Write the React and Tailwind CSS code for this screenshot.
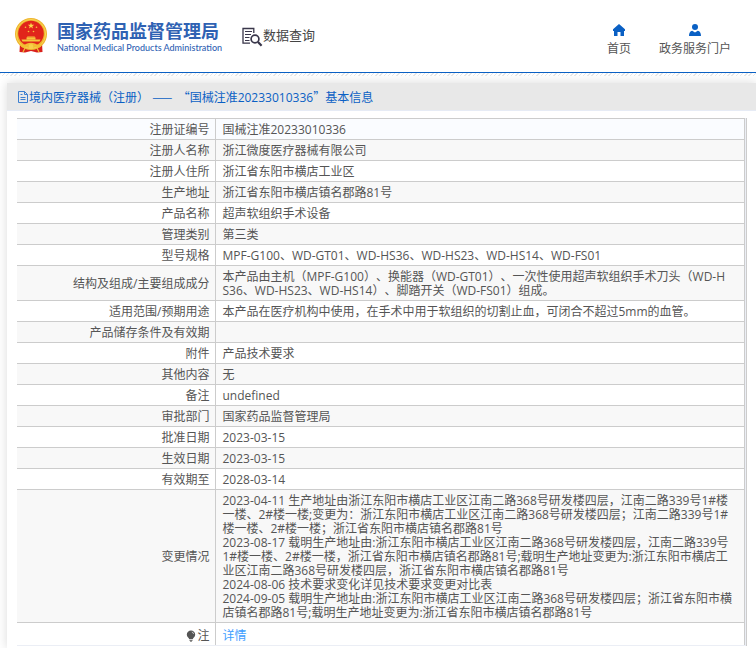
import React from 'react';

const rows = [
    { label: '注册证编号', value: '国械注准20233010336' },
    { label: '注册人名称', value: '浙江微度医疗器械有限公司' },
    { label: '注册人住所', value: '浙江省东阳市横店工业区' },
    { label: '生产地址', value: '浙江省东阳市横店镇名郡路81号' },
    { label: '产品名称', value: '超声软组织手术设备' },
    { label: '管理类别', value: '第三类' },
    { label: '型号规格', value: 'MPF-G100、WD-GT01、WD-HS36、WD-HS23、WD-HS14、WD-FS01' },
    {
        label: '结构及组成/主要组成成分',
        value: '本产品由主机（MPF-G100）、换能器（WD-GT01）、一次性使用超声软组织手术刀头（WD-H\nS36、WD-HS23、WD-HS14）、脚踏开关（WD-FS01）组成。',
    },
    { label: '适用范围/预期用途', value: '本产品在医疗机构中使用，在手术中用于软组织的切割止血，可闭合不超过5mm的血管。' },
    { label: '产品储存条件及有效期', value: '' },
    { label: '附件', value: '产品技术要求' },
    { label: '其他内容', value: '无' },
    { label: '备注', value: 'undefined' },
    { label: '审批部门', value: '国家药品监督管理局' },
    { label: '批准日期', value: '2023-03-15' },
    { label: '生效日期', value: '2023-03-15' },
    { label: '有效期至', value: '2028-03-14' },
    {
        label: '变更情况',
        value: [
            '2023-04-11 生产地址由浙江东阳市横店工业区江南二路368号研发楼四层，江南二路339号1#楼',
            '一楼、2#楼一楼;变更为：浙江东阳市横店工业区江南二路368号研发楼四层；江南二路339号1#',
            '楼一楼、2#楼一楼；浙江省东阳市横店镇名郡路81号',
            '2023-08-17 载明生产地址由:浙江东阳市横店工业区江南二路368号研发楼四层，江南二路339号',
            '1#楼一楼、2#楼一楼，浙江省东阳市横店镇名郡路81号;载明生产地址变更为:浙江东阳市横店工',
            '业区江南二路368号研发楼四层，浙江省东阳市横店镇名郡路81号',
            '2024-08-06 技术要求变化详见技术要求变更对比表',
            '2024-09-05 载明生产地址由:浙江东阳市横店工业区江南二路368号研发楼四层；浙江省东阳市横',
            '店镇名郡路81号;载明生产地址变更为:浙江省东阳市横店镇名郡路81号',
        ].join('\n'),
    },
];

function Emblem() {
    return (
        <svg viewBox="0 0 32 35" className="w-8 h-[35px] shrink-0" aria-hidden="true">
            <path d="M5 25L27 25L27.500 34L22 34.500L16 33L10 34.500L4.500 34Z" fill="#d9211c" />
            <circle cx="16" cy="16" r="16" fill="#efb52c" />
            <circle cx="16" cy="16" r="14.600" fill="none" stroke="#f8d456" strokeWidth="1" />
            <circle cx="16" cy="15.500" r="12.800" fill="#e1251b" />
            <path d="M16 4.600l.8 2.200h2.400l-1.900 1.400.7 2.300-2-1.400-2 1.400.7-2.300-1.900-1.400h2.400z" fill="#fbd94a" />
            <g fill="#f6c63c">
                <circle cx="10.500" cy="9.200" r=".8" />
                <circle cx="21.500" cy="9.200" r=".8" />
                <circle cx="13.500" cy="13.500" r=".8" />
                <circle cx="18.500" cy="13.500" r=".8" />
                <path d="M12.400 18.400h7.200l1 1.400h-9.200z" />
                <path d="M11.500 19.800h9v1.800h-9z" />
                <path d="M6.500 21.600h19l-1 2h-17z" />
            </g>
            <path d="M5 26c3 2 5 .6 7-.4 2.600-1 5.400-1 8 0 2 1 4 2.400 7 .4l-1.500 3c-2.500 1-4.500.5-6-.3-2-1-5-1-7 0-1.500.8-3.500 1.300-6 .3z" fill="#f3bd33" />
            <circle cx="16" cy="28.500" r="2.400" fill="#f8cf4a" />
            <path d="M10 30l-2 4M22 30l2 4" stroke="#f3bd33" strokeWidth="1.200" />
        </svg>
    );
}

function SearchDocIcon() {
    return (
        <svg viewBox="0 0 21 20" className="w-[21px] h-5 shrink-0" fill="none" stroke="#39364a" aria-hidden="true">
            <path d="M8 16.200H1V1.500h10.800V6" strokeWidth="1.300" />
            <path d="M3 4.500h7M3 7.500h6M3 10.500h4.500M3 13.500h4.500" strokeWidth="1" />
            <circle cx="13" cy="12" r="3.900" strokeWidth="1.700" />
            <path d="M16 15l3.600 3.800" strokeWidth="2.200" />
        </svg>
    );
}

function HomeIcon() {
    return (
        <svg viewBox="0 0 12 12" className="w-3 h-3" fill="#0a60c4" aria-hidden="true">
            <path d="M6 0L0 5.300V7h1v5h3.500V8h3v4H11V7h1V5.300z" />
        </svg>
    );
}

function UserIcon() {
    return (
        <svg viewBox="0 0 12 12" className="w-3 h-3" fill="#0a60c4" aria-hidden="true">
            <circle cx="6" cy="3" r="3" />
            <path d="M0 12c0-3 1-4.800 3.200-5.300L6 8.600l2.800-1.900C11 7.200 12 9 12 12z" />
        </svg>
    );
}

function DocIcon() {
    return (
        <svg viewBox="0 0 12 12" className="w-3 h-3 shrink-0" fill="none" stroke="#3c7fd0" strokeWidth="1" aria-hidden="true">
            <path d="M1.500.5h6l3 3v8h-9zM7.500.5v3h3M3.500 3.500h2M3.500 6.500h5M3.500 8.500h5" />
        </svg>
    );
}

function BulbIcon() {
    return (
        <svg viewBox="0 0 10 12" className="w-[10px] h-3 mr-px" aria-hidden="true">
            <path d="M5 .5a4.200 4.200 0 0 1 4.200 4.200C9.200 6.800 7 7.800 6.700 9.300H3.300C3 7.800.8 6.800.8 4.700A4.200 4.200 0 0 1 5 .5z" fill="#555" />
            <path d="M3.500 10.500h3M4.200 11.600h1.600" stroke="#555" strokeWidth=".8" />
            <path d="M5.800 2c1 .2 1.700 1 1.800 2" stroke="#ddd" strokeWidth=".8" fill="none" />
        </svg>
    );
}

export default function App() {
    return (
        <div className="min-h-screen overflow-hidden bg-white text-xs text-[#555] font-['Open_Sans','Noto_Sans_CJK_SC',sans-serif] [text-spacing-trim:space-all]">
            {/* Site header */}
            <header className="flex items-start justify-between h-[73px] border-b border-[#0a60c4] pl-[15px] pr-[25px]">
                <div className="flex items-start">
                    <a href="#" className="flex gap-[10px] pt-[18px] text-[#2f62b3]">
                        <Emblem />
                        <span className="flex flex-col pt-[3px]">
                            <span className="text-[18px] leading-5 font-bold whitespace-nowrap">国家药品监督管理局</span>
                            <span className="pt-px text-[9px] leading-3 font-medium whitespace-nowrap font-['Lato',sans-serif]">
                                National Medical Products Administration
                            </span>
                        </span>
                    </a>
                    <h1 className="flex items-start pl-5 pt-[27px] text-[#444]">
                        <SearchDocIcon />
                        <span className="text-[13px] leading-4 whitespace-nowrap">数据查询</span>
                    </h1>
                </div>
                <nav className="flex gap-7 pt-6 text-[#555] leading-4">
                    <a href="#" className="flex flex-col items-center gap-[5px]">
                        <HomeIcon />
                        首页
                    </a>
                    <a href="#" className="flex flex-col items-center gap-[5px]">
                        <UserIcon />
                        政务服务门户
                    </a>
                </nav>
            </header>
            <div className="h-[3px] bg-[repeating-linear-gradient(135deg,#e8e8e8_0_1px,#fff_1px_3px)]"></div>

            {/* Detail panel */}
            <main className="mt-[7px] ml-[7px] bg-white shadow-[0_0_10px_rgba(0,0,0,0.15)]">
                <h2 className="flex items-center h-7 pt-px pl-[10px] bg-[#e8e8e8] border-b border-[#e6ebf5] text-[#0a60c4]">
                    <DocIcon />
                    <span className="whitespace-pre">
                        境内医疗器械（注册）{' '}
                        <span className="font-['Noto_Sans_CJK_SC',sans-serif]">——  “</span>
                        国械注准20233010336
                        <span className="font-['Noto_Sans_CJK_SC',sans-serif]">”</span>
                        基本信息
                    </span>
                </h2>
                <div className="pt-[7px] pl-[10px] pr-[9px] pb-[2px]">
                    <div className="border-r border-[#ccc] bg-[#ebeef5] pr-px">
                        <table className="w-full border-collapse bg-white leading-[14px]">
                            <tbody>
                                {rows.map((row) => (
                                    <tr key={row.label} className="even:bg-[#f8f8f8] first:bg-[#fafcff]">
                                        <th scope="row" className="w-[198px] border-y border-r border-[#ccc] pt-1 pb-[2px] pr-[5px] text-right font-normal">
                                            {row.label}
                                        </th>
                                        <td className="border border-[#ccc] pt-1 pb-[2px] pl-[7px] break-all whitespace-pre-line">{row.value}</td>
                                    </tr>
                                ))}
                                <tr>
                                    <th scope="row" className="border-r border-b border-[#ccc] border-b-[#ebeef5] pt-[6px] pb-[2px] pr-[5px] font-normal">
                                        <span className="flex items-center justify-end">
                                            <BulbIcon />注
                                        </span>
                                    </th>
                                    <td className="border-r border-b border-[#ccc] border-b-[#ebeef5] pt-[6px] pb-[2px] pl-[7px]">
                                        <a href="#" className="text-[#409eff]">详情</a>
                                    </td>
                                </tr>
                            </tbody>
                        </table>
                    </div>
                </div>
            </main>
        </div>
    );
}
